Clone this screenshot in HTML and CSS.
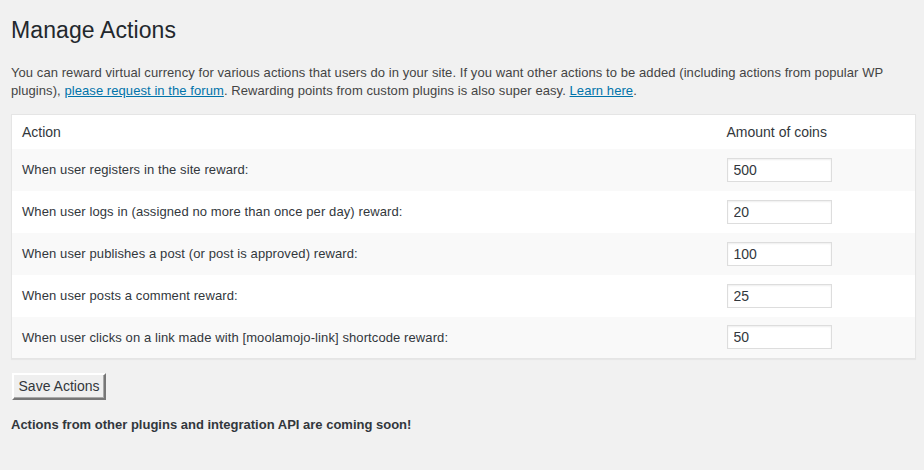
FILE: index.html
```html
<!DOCTYPE html>
<html>
<head>
<meta charset="utf-8">
<link rel="stylesheet" href="styles.css">
</head>
<body>
<div class="wrap">
  <h1 class="title">Manage Actions</h1>
  <p class="intro">You can reward virtual currency for various actions that users do in your site. If you want other actions to be added (including actions from popular WP plugins), <a href="#">please request in the forum</a>. Rewarding points from custom plugins is also super easy. <a href="#">Learn here</a>.</p>
  <table class="actions">
    <colgroup><col class="col-action"><col class="col-amount"></colgroup>
    <thead>
      <tr><th>Action</th><th>Amount of coins</th></tr>
    </thead>
    <tbody>
      <tr class="alt"><td>When user registers in the site reward:</td><td><input class="coins" type="text" value="500"></td></tr>
      <tr><td>When user logs in (assigned no more than once per day) reward:</td><td><input class="coins" type="text" value="20"></td></tr>
      <tr class="alt"><td>When user publishes a post (or post is approved) reward:</td><td><input class="coins" type="text" value="100"></td></tr>
      <tr><td>When user posts a comment reward:</td><td><input class="coins" type="text" value="25"></td></tr>
      <tr class="alt"><td>When user clicks on a link made with [moolamojo-link] shortcode reward:</td><td><input class="coins" type="text" value="50"></td></tr>
    </tbody>
  </table>
  <div class="submit-row"><button class="save" type="button">Save Actions</button></div>
  <p class="note">Actions from other plugins and integration API are coming soon!</p>
</div>
</body>
</html>
```

FILE: styles.css
```css
html, body {
  margin: 0;
  padding: 0;
  background: #f1f1f1;
}
body {
  font-family: "Liberation Sans", Arial, sans-serif;
  font-size: 13px;
  color: #444;
}
.wrap {
  padding: 0 8px 0 11px;
}
.title {
  margin: 0;
  padding-top: 16px;
  font-size: 23px;
  line-height: 29px;
  font-weight: 400;
  color: #23282d;
  letter-spacing: 0.1px;
}
.intro {
  margin: 18px 0 0;
  line-height: 18px;
  padding-top: 1px;
  color: #444;
  letter-spacing: 0.07px;
}
.intro a {
  color: #0073aa;
  text-decoration: underline;
}
.actions {
  margin-top: 14px;
  width: 100%;
  table-layout: fixed;
  border-collapse: collapse;
  border: 1px solid #e5e5e5;
  background: #fff;
  box-shadow: 0 1px 1px rgba(0,0,0,.04);
}
.col-amount { width: 199px; }
.actions th {
  text-align: left;
  font-weight: 400;
  font-size: 14px;
  color: #32373c;
  height: 34px;
  padding: 0 10px;
  box-sizing: border-box;
  vertical-align: middle;
}
.actions td {
  height: 42px;
  padding: 0 10px;
  box-sizing: border-box;
  color: #32373c;
  vertical-align: middle;
  letter-spacing: 0.1px;
}
.actions tr.alt td {
  background: #f9f9f9;
}
.coins {
  display: block;
  box-sizing: border-box;
  width: 105px;
  height: 24px;
  margin: 0;
  padding: 0 6px;
  border: 1px solid #ddd;
  box-shadow: inset 0 1px 2px rgba(0,0,0,.07);
  background: #fff;
  font-family: "Liberation Sans", Arial, sans-serif;
  font-size: 14px;
  color: #32373c;
  outline: none;
}
.submit-row {
  display: flex;
  margin-top: 14px;
  padding-left: 1px;
}
.save {
  box-sizing: border-box;
  height: 27px;
  width: 94px;
  padding: 0 4px;
  margin: 0;
  white-space: nowrap;
  font-family: "Liberation Sans", Arial, sans-serif;
  font-size: 14px;
  line-height: 23px;
  color: #32373c;
  background: #efefef;
  border-style: solid;
  border-width: 2px;
  border-color: #fff #777 #777 #fff;
  box-shadow: inset -1px -1px 0 #a8a8a8;
  border-radius: 0;
}
.note {
  margin: 16px 0 0;
  font-weight: 700;
  color: #32373c;
  line-height: 18px;
}
```
